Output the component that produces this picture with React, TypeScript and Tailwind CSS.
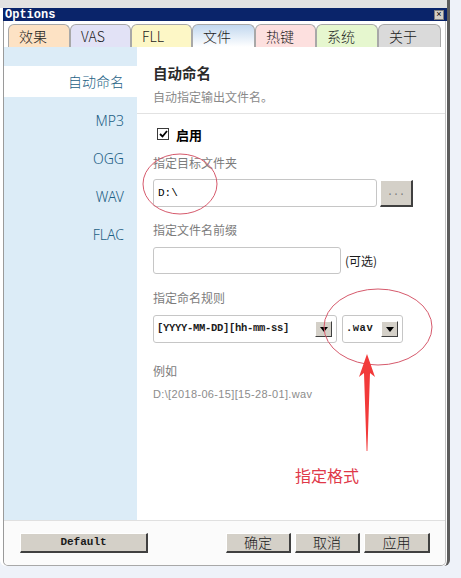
const tabs = [
  { label: "效果", w: "w-[62px]", bg: "bg-[#fde2c4]" },
  { label: "VAS", w: "w-[61px]", bg: "bg-[#e2e2f6]" },
  { label: "FLL", w: "w-[61px]", bg: "bg-[#fdf7c6]" },
  { label: "文件", w: "w-[63px]", bg: "bg-linear-to-b from-[#c2d8ef] to-white", active: true },
  { label: "热键", w: "w-[61px]", bg: "bg-[#fde0df]" },
  { label: "系统", w: "w-[62px]", bg: "bg-[#e6f7cf]" },
  { label: "关于", w: "w-[63px]", bg: "bg-[#dadada]" },
];

const formats = ["MP3", "OGG", "WAV", "FLAC"];

function ArrowButton() {
  return (
    <div className="flex h-[16px] w-[17px] items-center justify-center border border-t-white border-l-white border-r-[#404040] border-b-[#404040] bg-[#d4d0c8]">
      <svg width="8" height="5" viewBox="0 0 8 5">
        <path d="M0 0 L8 0 L4 5 Z" fill="#000" />
      </svg>
    </div>
  );
}

function ClassicButton({ label, className }: { label: string; className: string }) {
  return (
    <div
      className={`flex h-[20px] items-center justify-center border-t border-l border-t-white border-l-white border-r-2 border-b-2 border-r-[#404040] border-b-[#404040] bg-[#d4d0c8] ${className}`}
    >
      {label}
    </div>
  );
}

export default function App() {
  return (
    <div className="relative h-[578px] w-[461px] overflow-hidden bg-[#eef2f9] font-['Noto_Sans_CJK_SC',sans-serif]">
      <div className="flex h-[566px] w-[450px] flex-col rounded-b-[6px] border-r-[3px] border-r-[#5c5c5c] bg-white">
        <div className="h-[8px] bg-[#e2e2e2]" />
        <div className="ml-[3px] flex h-[13px] items-center justify-between bg-[#0a246a] pl-[2px] pr-[3px]">
          <span className="font-['Liberation_Mono',monospace] text-[12px] font-bold leading-none text-white">
            Options
          </span>
          <div className="flex h-[10px] w-[10px] items-center justify-center border border-[#808080] bg-[#d4d0c8] font-['Liberation_Sans',sans-serif] text-[9px] leading-none text-black">
            ×
          </div>
        </div>

        <div className="ml-[3px] mr-[1px] flex flex-1 flex-col rounded-b-[5px] border-x border-b border-l-[#9a9a9a] border-r-[#c4c4c4] border-b-[#a8a8a8]">
          {/* tabs */}
          <div className="flex h-[26px] items-end pl-[4px]">
            {tabs.map((t) => (
              <div
                key={t.label}
                className={`flex h-[23px] items-center rounded-t-[6px] border border-b-0 border-[#a8a8a8] pl-[10px] text-[14px] font-light leading-none text-[#1c1c1c] ${t.w} ${t.bg}`}
              >
                {t.label}
              </div>
            ))}
          </div>

          {/* body */}
          <div className="flex h-[473px]">
            <div className="flex w-[133px] flex-col bg-[#dcecf7]">
              <div className="h-[19px]" />
              <div className="flex h-[31px] items-center justify-end bg-white pr-[13px] text-[14px] font-light text-[#1d5f85]">
                自动命名
              </div>
              <div className="h-[4px]" />
              {formats.map((f) => (
                <div
                  key={f}
                  className="flex h-[38px] items-center justify-end pr-[13px] font-['Noto_Sans',sans-serif] text-[14px] font-light text-[#1d5f85]"
                >
                  {f}
                </div>
              ))}
            </div>

            <div className="flex flex-1 flex-col">
              <div className="h-[67px] border-b border-[#e2e2e2] pl-[16px] pt-[16px]">
                <div className="h-[20px] text-[14.5px] font-bold leading-[20px] text-[#2a2a2a]">
                  自动命名
                </div>
                <div className="mt-[6px] h-[16px] text-[12px] leading-[16px] text-[#8a8a8a]">
                  自动指定输出文件名。
                </div>
              </div>

              <div className="flex flex-col pl-[16px] pr-[30px]">
                <div className="mt-[10px] flex h-[20px] items-center">
                  <div className="ml-[4px] flex h-[12px] w-[12px] items-center justify-center border border-[#3a3a3a] bg-white">
                    <svg width="9" height="8" viewBox="0 0 9 8">
                      <path d="M1 4 L3.5 6.5 L8 1" stroke="#000" strokeWidth="1.8" fill="none" />
                    </svg>
                  </div>
                  <span className="ml-[7px] text-[13px] font-bold leading-none text-black">启用</span>
                </div>

                <div className="mt-[11px] h-[16px] text-[12px] leading-[16px] text-[#7c7c7c]">指定目标文件夹</div>
                <div className="mt-[8px] flex h-[28px] items-center">
                  <div className="flex h-[28px] w-[224px] items-center rounded-[3px] border border-[#c6c6c6] pl-[4px] font-['Liberation_Mono',monospace] text-[11px] text-black">
                    D:\
                  </div>
                  <div className="ml-[3px] flex h-[27px] w-[33px] items-center justify-center border-t border-l border-t-white border-l-white border-r-2 border-b-2 border-r-[#404040] border-b-[#404040] bg-[#d4d0c8] font-['Liberation_Mono',monospace] text-[10px] text-[#777]">
                    ...
                  </div>
                </div>

                <div className="mt-[15px] h-[16px] text-[12px] leading-[16px] text-[#7c7c7c]">指定文件名前缀</div>
                <div className="mt-[9px] flex h-[27px] items-center">
                  <div className="h-[27px] w-[188px] rounded-[3px] border border-[#c6c6c6]" />
                  <span className="ml-[4px] text-[12px] text-[#1c1c1c]">(可选)</span>
                </div>

                <div className="mt-[16px] h-[16px] text-[12px] leading-[16px] text-[#7c7c7c]">指定命名规则</div>
                <div className="mt-[9px] flex h-[28px] items-center">
                  <div className="flex h-[28px] w-[184px] items-center justify-between rounded-[3px] border border-[#c6c6c6] pl-[3px] pr-[4px]">
                    <span className="font-['Liberation_Mono',monospace] text-[10.5px] font-bold tracking-[-0.3px] text-[#1a1a1a]">
                      [YYYY-MM-DD][hh-mm-ss]
                    </span>
                    <ArrowButton />
                  </div>
                  <div className="ml-[5px] flex h-[28px] w-[61px] items-center justify-between rounded-[3px] border border-[#c6c6c6] pl-[3px] pr-[4px]">
                    <span className="font-['Liberation_Mono',monospace] text-[10.5px] font-bold tracking-[0.5px] text-[#1a1a1a]">
                      .wav
                    </span>
                    <ArrowButton />
                  </div>
                </div>

                <div className="mt-[20px] h-[16px] text-[12px] leading-[16px] text-[#7c7c7c]">例如</div>
                <div className="mt-[7px] h-[16px] font-['Liberation_Sans',sans-serif] text-[11px] leading-[16px] tracking-[0.35px] text-[#8c8c8c]">
                  D:\[2018-06-15][15-28-01].wav
                </div>
              </div>
            </div>
          </div>

          {/* footer */}
          <div className="flex flex-1 items-start rounded-b-[5px] border-t border-[#e0e0e0] bg-[#fbfbfb] pl-[16px] pr-[15px] pt-[12px]">
            <ClassicButton
              label="Default"
              className="w-[128px] font-['Liberation_Mono',monospace] text-[11px] font-bold text-[#1a1a1a]"
            />
            <div className="ml-auto flex gap-[4px] text-[14px] font-light text-[#1a1a1a]">
              <ClassicButton label="确定" className="w-[65px]" />
              <ClassicButton label="取消" className="w-[65px]" />
              <ClassicButton label="应用" className="w-[66px]" />
            </div>
          </div>
        </div>
      </div>

      {/* annotations */}
      <svg className="pointer-events-none absolute left-0 top-0" width="461" height="578" viewBox="0 0 461 578">
        <ellipse cx="180" cy="184" rx="37" ry="30" fill="none" stroke="#d65a6c" strokeWidth="1" />
        <ellipse cx="378" cy="327" rx="54" ry="38" fill="none" stroke="#d65a6c" strokeWidth="1" />
        <path d="M367 354 L375 377 L370 373 L367.4 451 L366.6 451 L364 373 L359 377 Z" fill="#f23a3a" />
      </svg>
      <div className="absolute left-[295px] top-[465px] text-[16px] leading-[20px] text-[#e03848]">指定格式</div>
    </div>
  );
}
